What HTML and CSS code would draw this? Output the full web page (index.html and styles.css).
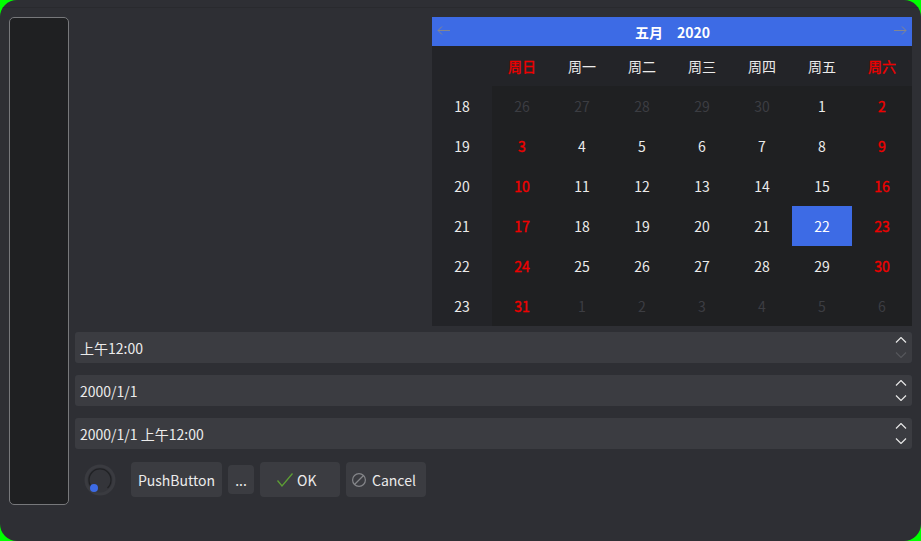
FILE: index.html
```html
<!DOCTYPE html>
<html lang="zh-CN">
<head>
<meta charset="utf-8">
<title>Widgets</title>
<link rel="stylesheet" href="styles.css">
</head>
<body>
<div class="window">
  <div class="topline"></div>
  <div class="main">
    <div class="sidepanel"></div>
    <div class="content">
      <div class="cal-row">
        <div class="calendar">
          <div class="cal-head">
            <svg class="nav" width="14" height="10" viewBox="0 0 14 10"><path d="M13 4.500H1M5 .5L1 4.500l4 4" fill="none" stroke="#84868f" stroke-width="1"/></svg>
            <div class="cal-title"><span>五月</span><span>2020</span></div>
            <svg class="nav" width="14" height="10" viewBox="0 0 14 10"><path d="M1 4.500H13M9 .5l4 4-4 4" fill="none" stroke="#84868f" stroke-width="1"/></svg>
          </div>
          <div class="cal-grid">
            <div class="wk"></div><div class="wk red">周日</div><div class="wk">周一</div><div class="wk">周二</div><div class="wk">周三</div><div class="wk">周四</div><div class="wk">周五</div><div class="wk red">周六</div>

            <div class="wn">18</div><div class="d off">26</div><div class="d off">27</div><div class="d off">28</div><div class="d off">29</div><div class="d off">30</div><div class="d">1</div><div class="d red">2</div>
            <div class="wn">19</div><div class="d red">3</div><div class="d">4</div><div class="d">5</div><div class="d">6</div><div class="d">7</div><div class="d">8</div><div class="d red">9</div>
            <div class="wn">20</div><div class="d red">10</div><div class="d">11</div><div class="d">12</div><div class="d">13</div><div class="d">14</div><div class="d">15</div><div class="d red">16</div>
            <div class="wn">21</div><div class="d red">17</div><div class="d">18</div><div class="d">19</div><div class="d">20</div><div class="d">21</div><div class="d sel">22</div><div class="d red">23</div>
            <div class="wn">22</div><div class="d red">24</div><div class="d">25</div><div class="d">26</div><div class="d">27</div><div class="d">28</div><div class="d">29</div><div class="d red">30</div>
            <div class="wn">23</div><div class="d red">31</div><div class="d off">1</div><div class="d off">2</div><div class="d off">3</div><div class="d off">4</div><div class="d off">5</div><div class="d off">6</div>
          </div>
        </div>
      </div>
      <div class="spin">
        <span class="spin-text">上午12:00</span>
        <div class="arrows">
          <svg width="12" height="6" viewBox="0 0 12 6"><path d="M1 5.500l5-5 5 5" fill="none" stroke="#e6e6e6" stroke-width="1.200"/></svg>
          <svg width="12" height="6" viewBox="0 0 12 6"><path d="M1 .5l5 5 5-5" fill="none" stroke="#55565b" stroke-width="1.200"/></svg>
        </div>
      </div>
      <div class="spin">
        <span class="spin-text">2000/1/1</span>
        <div class="arrows">
          <svg width="12" height="6" viewBox="0 0 12 6"><path d="M1 5.500l5-5 5 5" fill="none" stroke="#e6e6e6" stroke-width="1.200"/></svg>
          <svg width="12" height="6" viewBox="0 0 12 6"><path d="M1 .5l5 5 5-5" fill="none" stroke="#e6e6e6" stroke-width="1.200"/></svg>
        </div>
      </div>
      <div class="spin">
        <span class="spin-text">2000/1/1 上午12:00</span>
        <div class="arrows">
          <svg width="12" height="6" viewBox="0 0 12 6"><path d="M1 5.500l5-5 5 5" fill="none" stroke="#e6e6e6" stroke-width="1.200"/></svg>
          <svg width="12" height="6" viewBox="0 0 12 6"><path d="M1 .5l5 5 5-5" fill="none" stroke="#e6e6e6" stroke-width="1.200"/></svg>
        </div>
      </div>
      <div class="buttons">
        <svg class="dial" width="32" height="32" viewBox="0 0 32 32">
          <circle cx="16" cy="16" r="15.500" fill="#3a3b40"/>
          <circle cx="16" cy="16" r="12.500" fill="#34353a"/>
          <path d="M8.500 24A11 11 0 1 1 23.500 24" fill="none" stroke="#202124" stroke-width="1.200"/>
          <circle cx="10" cy="24" r="4" fill="#3d6be5"/>
        </svg>
        <div class="btn push">PushButton</div>
        <div class="btn small">...</div>
        <div class="btn action ok">
          <svg width="16" height="14" viewBox="0 0 16 14"><path d="M.5 7.500L5 13 15.500 .5" fill="none" stroke="#5d9e35" stroke-width="1.300"/></svg>
          <span>OK</span>
        </div>
        <div class="btn action cancel">
          <svg width="14" height="14" viewBox="0 0 14 14"><circle cx="7" cy="7" r="6.400" fill="none" stroke="#85868a" stroke-width="1.200"/><path d="M2.500 11.500L11.500 2.500" stroke="#85868a" stroke-width="1.200"/></svg>
          <span>Cancel</span>
        </div>
      </div>
    </div>
  </div>
</div>
</body>
</html>
```

FILE: styles.css
```css
* { box-sizing: border-box; }
html, body { margin: 0; padding: 0; }
body {
  width: 921px;
  height: 541px;
  background: #00ff00;
  overflow: hidden;
  font-family: "Noto Sans CJK SC", "Noto Sans", sans-serif;
  font-size: 14px;
  color: #ebebeb;
}
.window {
  width: 921px;
  height: 541px;
  background: #2e2f34;
  border-radius: 17px;
  overflow: hidden;
}
.topline {
  height: 8px;
  border-bottom: 1px solid #292a2e;
}
.main {
  display: flex;
  padding: 9px 9px 0 9px;
  gap: 6px;
}
.sidepanel {
  width: 60px;
  height: 488px;
  background: #1f2022;
  border: 1px solid #77787b;
  border-radius: 5px;
  flex: none;
}
.content {
  flex: 1;
  min-width: 0;
  display: flex;
  flex-direction: column;
}
.cal-row {
  display: flex;
  justify-content: flex-end;
  margin-bottom: 6px;
}
.calendar {
  width: 480px;
  height: 309px;
  background: #232428;
}
.cal-head {
  height: 29px;
  background: #3d6be5;
  display: flex;
  align-items: flex-start;
  justify-content: space-between;
  padding: 7px 5px 0 5px;
}
.nav { margin-top: 2px; }
.cal-title {
  display: flex;
  gap: 14px;
  margin-left: 1px;
  font-weight: 700;
  color: #ffffff;
  line-height: 16px;
  font-size: 14px;
}
.cal-grid {
  display: grid;
  grid-template-columns: repeat(8, 60px);
  grid-template-rows: repeat(7, 40px);
}
.wk, .wn, .d {
  display: flex;
  align-items: center;
  justify-content: center;
}
.wk { background: #232428; }
.wk.red, .d.red { color: #f00000; -webkit-text-stroke: 0.35px #f00000; }
.wn { background: #232428; }
.d { background: #1f2022; }
.d.off { color: #3c3d42; }
.d.sel { background: #3d6be5; color: #ffffff; }
.spin {
  height: 31px;
  background: #3b3c41;
  border-radius: 3px;
  display: flex;
  align-items: center;
  justify-content: space-between;
  padding: 0 5px;
  margin-bottom: 12px;
  flex: none;
}
.spin-text { line-height: 20px; }
.arrows {
  display: flex;
  flex-direction: column;
  gap: 9px;
  margin-top: -1px;
}
.arrows svg { display: block; }
.buttons {
  display: flex;
  align-items: center;
  gap: 6px;
  margin-top: 1px;
  height: 35px;
}
.dial { flex: none; margin: 0 9px 0 9px; }
.btn {
  background: #3b3c41;
  border-radius: 4px;
  display: flex;
  align-items: center;
  justify-content: center;
  flex: none;
}
.push { width: 91px; height: 35px; }
.small { width: 26px; height: 29px; }
.action { width: 80px; height: 35px; justify-content: flex-start; }
.action svg { display: block; }
.ok { padding-left: 17px; gap: 4px; }
.cancel { padding-left: 6px; gap: 6px; }
```
